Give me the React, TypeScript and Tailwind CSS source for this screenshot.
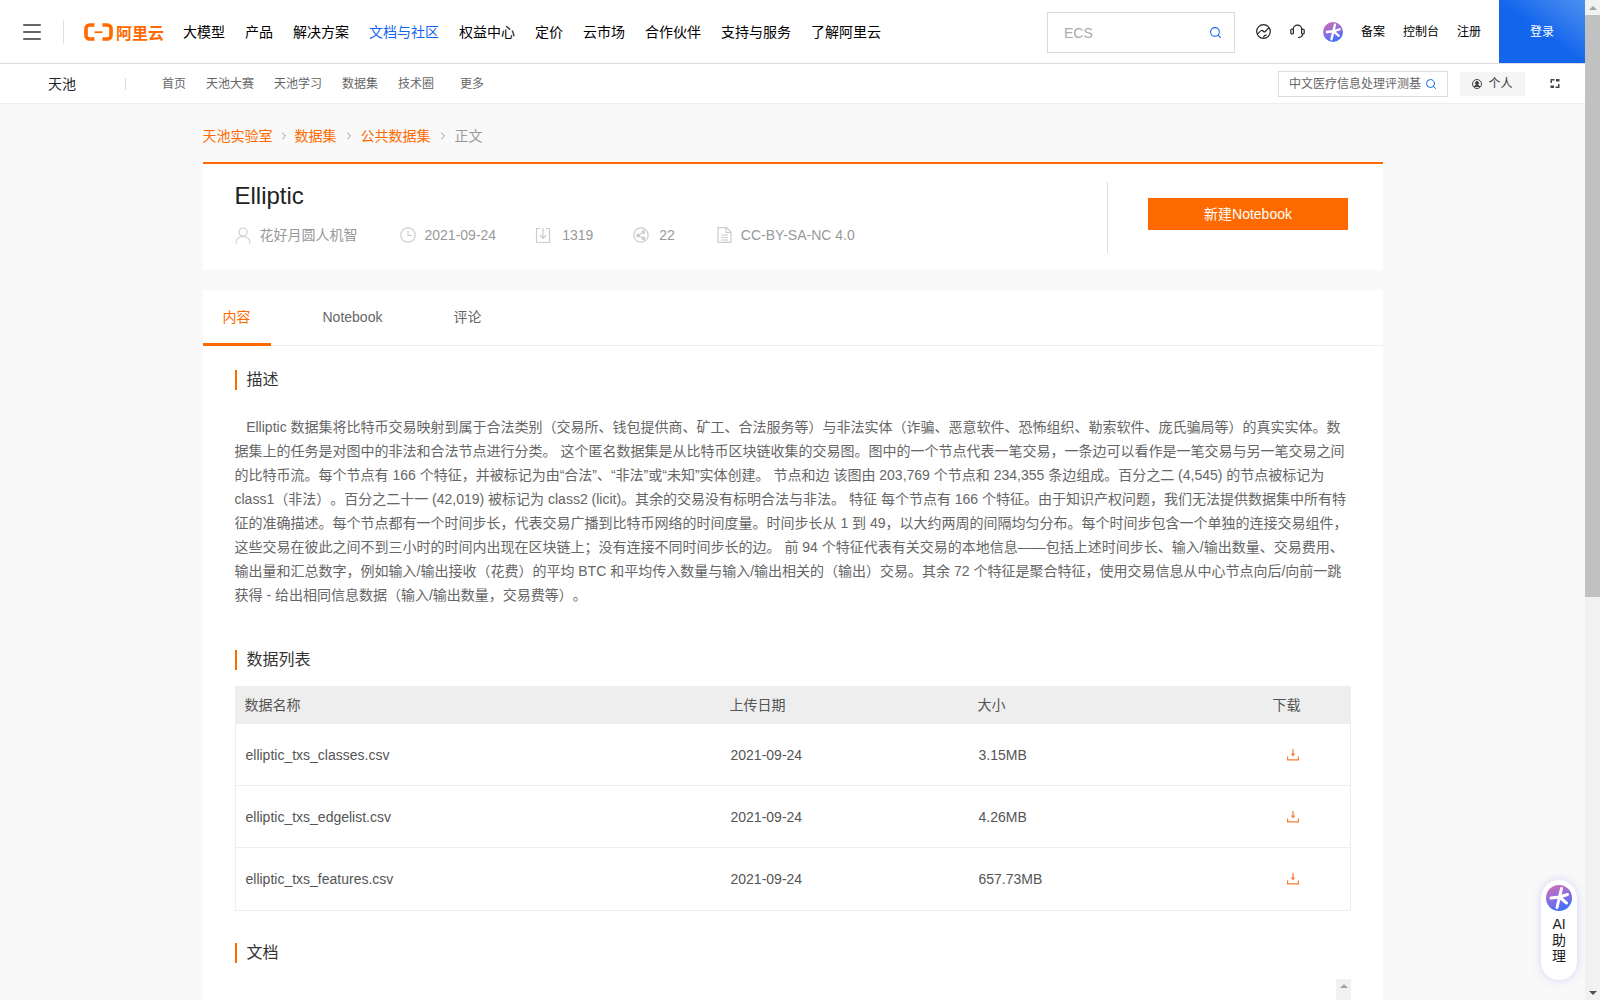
import { Search, Menu, ChevronRight } from "lucide-react"

const navItems = ["大模型", "产品", "解决方案", "文档与社区", "权益中心", "定价", "云市场", "合作伙伴", "支持与服务", "了解阿里云"]
const subItems = ["首页", "天池大赛", "天池学习", "数据集", "技术圈"]

const files = [
  { name: "elliptic_txs_classes.csv", size: "3.15MB", rowClass: "h-[61px]" },
  { name: "elliptic_txs_edgelist.csv", size: "4.26MB", rowClass: "h-[62px] border-t border-[#eee]" },
  { name: "elliptic_txs_features.csv", size: "657.73MB", rowClass: "h-[63px] border-t border-[#eee]" },
]

function Logo() {
  return (
    <div className="flex items-center gap-[3px] text-[#ff6a00]">
      <svg width="29" height="18" viewBox="0 0 29 18" fill="none">
        <path d="M10.500 2H5.500A3.500 3.500 0 0 0 2 5.500v7A3.500 3.500 0 0 0 5.500 16h5" stroke="#ff6a00" strokeWidth="3.600" />
        <path d="M18.500 2h5A3.500 3.500 0 0 1 27 5.500v7a3.500 3.500 0 0 1-3.500 3.500h-5" stroke="#ff6a00" strokeWidth="3.600" />
        <path d="M10.500 9.200h8" stroke="#ff6a00" strokeWidth="1.800" />
      </svg>
      <span className="text-base leading-none font-bold [font-family:'Noto_Sans_CJK_SC',sans-serif]">阿里云</span>
    </div>
  )
}

function AiIcon({ size }: { size: number }) {
  return (
    <svg width={size} height={size} viewBox="0 0 26 26">
      <defs>
        <linearGradient id={`ai-${size}`} x1="0.2" y1="0" x2="0.6" y2="1">
          <stop offset="0" stopColor="#d06cb0" />
          <stop offset="0.5" stopColor="#8f6fe0" />
          <stop offset="1" stopColor="#3a6ff8" />
        </linearGradient>
      </defs>
      <circle cx="13" cy="13" r="13" fill={`url(#ai-${size})`} />
      <path d="M15.500 3.500 13.500 12M13.500 12l8-2.500M13.500 12l7 6M13.500 12 11 22.500M13.500 12 5 13" stroke="#fff" strokeWidth="3" strokeLinecap="round" fill="none" />
    </svg>
  )
}

function DownloadIcon() {
  return (
    <svg width="12" height="12" viewBox="0 0 12 12" fill="none" stroke="#f97c32">
      <path d="M6 0v6" strokeWidth="1.200" />
      <path d="M3.800 4.600h4.400L6 7.400z" fill="#f97c32" stroke="none" />
      <path d="M.6 7.500v3.300h10.800V7.500" strokeWidth="1.200" />
    </svg>
  )
}

function SectionTitle({ children }: { children: string }) {
  return (
    <h3 className="flex h-5 items-center border-l-2 border-[#ff6a00] pl-[10px] text-base leading-5 text-[#333]">
      {children}
    </h3>
  )
}

function MetaItem({ icon, text, className }: { icon: React.ReactNode; text: string; className: string }) {
  return (
    <div className={`flex items-center ${className}`}>
      <span className="flex w-4 justify-center">{icon}</span>
      <span>{text}</span>
    </div>
  )
}

export default function App() {
  return (
    <div className="flex h-[1000px] overflow-hidden bg-[#f9f9f9] font-['Liberation_Sans','Noto_Sans_CJK_SC',sans-serif] text-[#333] [text-spacing-trim:space-all]">
      <div className="relative min-w-0 flex-1">
        <header className="flex h-16 items-center border-b border-[#dcdcdc] bg-white">
          <Menu className="ml-[20px] size-6 text-[#666]" strokeWidth={2} />
          <div className="mr-5 ml-[19px] h-6 w-px bg-[#e0e0e0]" />
          <Logo />
          <nav className="ml-[19px] flex gap-5 text-sm text-black">
            {navItems.map((item) => (
              <a key={item} className={item === "文档与社区" ? "text-[#1366ec]" : ""}>
                {item}
              </a>
            ))}
          </nav>
          <div className="mt-0.5 ml-auto flex h-[41px] w-[188px] items-center justify-between border border-[#d9d9d9] pr-3 pl-4 text-sm text-[#aaa]">
            ECS
            <Search className="size-[13px] text-[#1366ec]" />
          </div>
          <svg className="ml-[21px]" width="15" height="15" viewBox="0 0 15 15" fill="none" stroke="#222" strokeWidth="1.200">
            <circle cx="7.500" cy="7.500" r="6.800" />
            <path d="M1.200 10c2-.5 2.300-3 4.300-3.500 1.800-.4 1.800 1.800 3.300 1.400 1.600-.5 2.200-3.300 4.400-3.900M7.500 13.500c.3-1.800 1.700-2.800 3.300-2.400" />
          </svg>
          <svg className="ml-[19px]" width="15" height="15" viewBox="0 0 15 15" fill="none" stroke="#222" strokeWidth="1.200">
            <path d="M3.200 6V5.500a4.300 4.300 0 0 1 8.600 0V6" />
            <rect x=".8" y="5" width="2.600" height="5" rx="1.300" />
            <rect x="11.600" y="5" width="2.600" height="5" rx="1.300" />
            <path d="M12.500 10c0 2-1.800 3.500-4.500 3.500" />
          </svg>
          <span className="ml-[18px] flex">
            <AiIcon size={20} />
          </span>
          <div className="ml-[18px] flex gap-[18px] text-xs text-black">
            <a>备案</a>
            <a>控制台</a>
            <a>注册</a>
          </div>
          <button className="ml-[18px] h-[63px] w-[86px] self-start bg-gradient-to-tr from-[#1366ec] from-50% to-[#4d90f0] text-xs text-white">
            登录
          </button>
        </header>

        <div className="flex h-10 items-center border-b border-[#eee] bg-white text-xs text-[#666]">
          <span className="ml-12 text-sm text-[#222]">天池</span>
          <div className="mr-9 ml-[49px] h-3 w-px bg-[#ddd]" />
          <nav className="flex gap-5">
            {subItems.map((item) => (
              <a key={item}>{item}</a>
            ))}
            <a className="ml-1.5">更多</a>
          </nav>
          <div className="ml-auto flex h-[26px] w-[170px] items-center justify-between border border-[#ddd] pr-[10px] pl-[10px]">
            <span className="whitespace-nowrap">中文医疗信息处理评测基</span>
            <Search className="size-3 text-[#1366ec]" />
          </div>
          <div className="ml-3 flex h-6 w-[65px] items-center justify-center gap-1.5 bg-[#f5f5f5] text-[#333]">
            <svg width="10" height="10" viewBox="0 0 10 10" fill="none" stroke="#444">
              <circle cx="5" cy="5" r="4.500" />
              <circle cx="5" cy="4" r="1.500" fill="#444" />
              <path d="M2.200 8c.5-1.500 1.500-2 2.800-2s2.300.5 2.800 2" fill="#444" />
            </svg>
            个人
          </div>
          <svg className="mx-[25px]" width="10" height="11" viewBox="0 0 10 11" fill="#444" stroke="none">
            <path d="M.5 1h4v1.400H2v2.600H.5zM6 1h3.500v2.500H6zM.5 7.500H4V10H.5zM8 6h1.500v4H5.500V8.600H8z" />
          </svg>
        </div>

        <main className="mx-auto flex w-[1180px] flex-col">
          <div className="flex h-[58px] items-center pt-[6px] text-sm text-[#ff6a00]">
            <span>天池实验室</span>
            <ChevronRight className="mx-[5px] size-[12px] text-[#999]" />
            <span>数据集</span>
            <ChevronRight className="mx-[6px] size-[12px] text-[#999]" />
            <span>公共数据集</span>
            <ChevronRight className="mx-[6px] size-[12px] text-[#999]" />
            <span className="text-[#999]">正文</span>
          </div>

          <section className="flex h-[108px] border-t-2 border-[#ff6a00] bg-white">
            <div className="flex-1 pl-8">
              <h1 className="mt-[16px] text-2xl leading-8 text-[#222]">Elliptic</h1>
              <div className="mt-[13px] flex items-center text-sm text-[#999]">
                <MetaItem
                  className="mr-[42px] gap-[9px]"
                  text="花好月圆人机智"
                  icon={
                    <svg width="16" height="17" viewBox="0 0 16 17" fill="none" stroke="#ccc" strokeWidth="1.200">
                      <circle cx="8" cy="5" r="4" />
                      <path d="M1 16.500c0-4 2.500-7 7-7s7 3 7 7" />
                    </svg>
                  }
                />
                <MetaItem
                  className="mr-[39px] gap-[9px]"
                  text="2021-09-24"
                  icon={
                    <svg width="16" height="16" viewBox="0 0 16 16" fill="none" stroke="#ccc" strokeWidth="1.200">
                      <circle cx="8" cy="8" r="7.200" />
                      <path d="M8 3.500V8.500h4" />
                    </svg>
                  }
                />
                <MetaItem
                  className="mr-10 gap-[11px]"
                  text="1319"
                  icon={
                    <svg width="16" height="16" viewBox="0 0 16 16" fill="none" stroke="#ccc" strokeWidth="1.200">
                      <path d="M5 1.500H1.500v14h13v-14H11M8 1v10M5 8l3 3.500L11 8" />
                    </svg>
                  }
                />
                <MetaItem
                  className="mr-[42px] gap-[10px]"
                  text="22"
                  icon={
                    <svg width="16" height="16" viewBox="0 0 16 16" fill="none" stroke="#ccc" strokeWidth="1.200">
                      <circle cx="8" cy="8" r="7.200" />
                      <circle cx="5" cy="8.500" r="1.300" fill="#ccc" />
                      <circle cx="10.500" cy="5" r="1.300" fill="#ccc" />
                      <circle cx="10.500" cy="11.500" r="1.300" fill="#ccc" />
                      <path d="M5 8.500 10.500 5M5 8.500l5.500 3" />
                    </svg>
                  }
                />
                <MetaItem
                  className="gap-2"
                  text="CC-BY-SA-NC 4.0"
                  icon={
                    <svg width="15" height="16" viewBox="0 0 15 16" fill="none" stroke="#ccc" strokeWidth="1.200">
                      <path d="M1 .6h8.500L14 5v10.400H1zM9 .6V5.500h5M4 8h7M4 10.500h7M4 13h7" />
                    </svg>
                  }
                />
              </div>
            </div>
            <div className="mt-[18px] flex h-[71px] w-[276px] items-start justify-center border-l border-[#ddd] pt-4 pl-[6px]">
              <button className="h-8 w-[200px] bg-[#ff6a00] text-sm text-white">新建Notebook</button>
            </div>
          </section>

          <section className="mt-5 bg-white pb-10">
            <div className="flex h-[56px] items-end border-b border-[#eee] text-sm text-[#666]">
              <a className="-mb-px flex h-[56px] items-center border-b-[3px] border-[#ff6a00] px-5 pt-[1px] text-[#ff6a00]">内容</a>
              <a className="-mb-px ml-8 flex h-[56px] items-center border-b-[3px] border-transparent px-5 pt-[1px]">Notebook</a>
              <a className="-mb-px ml-[31px] flex h-[56px] items-center border-b-[3px] border-transparent px-5 pt-[1px]">评论</a>
            </div>
            <div className="px-8 pt-6">
              <SectionTitle>描述</SectionTitle>
              <p className="mt-[25px] -mr-[2px] text-sm leading-6 text-[#666]">
                {"\u00a0\u00a0 "}Elliptic 数据集将比特币交易映射到属于合法类别（交易所、钱包提供商、矿工、合法服务等）与非法实体（诈骗、恶意软件、恐怖组织、勒索软件、庞氏骗局等）的真实实体。数据集上的任务是对图中的非法和合法节点进行分类。 这个匿名数据集是从比特币区块链收集的交易图。图中的一个节点代表一笔交易，一条边可以看作是一笔交易与另一笔交易之间的比特币流。每个节点有 166 个特征，并被标记为由“合法”、“非法”或“未知”实体创建。 节点和边 该图由 203,769 个节点和 234,355 条边组成。百分之二 (4,545) 的节点被标记为 class1（非法）。百分之二十一 (42,019) 被标记为 class2 (licit)。其余的交易没有标明合法与非法。 特征 每个节点有 166 个特征。由于知识产权问题，我们无法提供数据集中所有特征的准确描述。每个节点都有一个时间步长，代表交易广播到比特币网络的时间度量。时间步长从 1 到 49，以大约两周的间隔均匀分布。每个时间步包含一个单独的连接交易组件，这些交易在彼此之间不到三小时的时间内出现在区块链上；没有连接不同时间步长的边。 前 94 个特征代表有关交易的本地信息——包括上述时间步长、输入/输出数量、交易费用、输出量和汇总数字，例如输入/输出接收（花费）的平均 BTC 和平均传入数量与输入/输出相关的（输出）交易。其余 72 个特征是聚合特征，使用交易信息从中心节点向后/向前一跳获得 - 给出相同信息数据（输入/输出数量，交易费等）。
              </p>

              <div className="mt-[43px]">
                <SectionTitle>数据列表</SectionTitle>
              </div>
              <div className="mt-4 border-x border-b border-[#eee] text-sm text-[#555]">
                <div className="grid h-[38px] grid-cols-[485px_248px_295px_1fr] items-center bg-[#eee] pl-[9px]">
                  <span>数据名称</span>
                  <span>上传日期</span>
                  <span>大小</span>
                  <span>下载</span>
                </div>
                {files.map((file) => (
                  <div
                    key={file.name}
                    className={`grid grid-cols-[485px_248px_295px_1fr] items-center pl-[10px] ${file.rowClass}`}
                  >
                    <span>{file.name}</span>
                    <span>2021-09-24</span>
                    <span>{file.size}</span>
                    <span className="pl-[13px]">
                      <DownloadIcon />
                    </span>
                  </div>
                ))}
              </div>

              <div className="mt-8">
                <SectionTitle>文档</SectionTitle>
              </div>
            </div>
          </section>
        </main>

        <div className="absolute right-[8px] bottom-[20px] flex h-[100px] w-9 flex-col items-center rounded-[18px] bg-white pt-[5px] text-sm leading-4 text-[#222] shadow-[0_0_10px_rgba(110,100,240,0.25)]">
          <AiIcon size={26} />
          <span className="mt-[5px] text-center">AI<br />助<br />理</span>
        </div>

        <div className="absolute bottom-0 left-[1336px] flex h-[21px] w-[15px] justify-center bg-[#f1f1f1] pt-[5px]">
          <div className="h-0 w-0 border-x-[4px] border-b-[4px] border-x-transparent border-b-[#a3a3a3]" />
        </div>
      </div>

      <div className="flex h-full w-[15px] flex-col bg-[#f1f1f1]">
        <div className="flex h-[15px] items-center justify-center">
          <div className="h-0 w-0 border-x-[4px] border-b-[4px] border-x-transparent border-b-[#a3a3a3]" />
        </div>
        <div className="h-[582px] bg-[#c1c1c1]" />
        <div className="mt-auto flex h-[15px] items-center justify-center">
          <div className="h-0 w-0 border-x-[4px] border-t-[4px] border-x-transparent border-t-[#505050]" />
        </div>
      </div>
    </div>
  )
}
